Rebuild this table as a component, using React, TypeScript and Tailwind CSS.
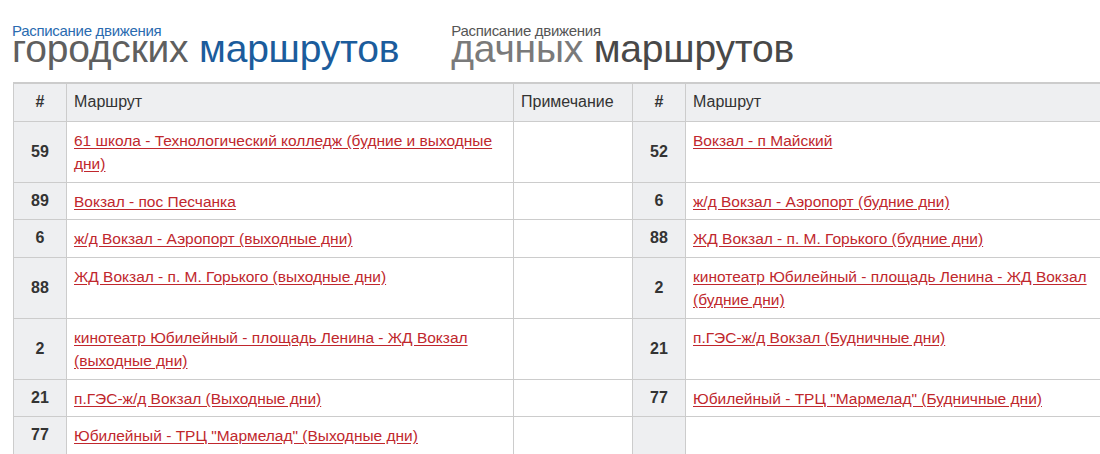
import React from 'react';

type Row = {
  ln: string;
  lt: string;
  rn?: string;
  rt?: string;
};

const rows: Row[] = [
  { ln: '59', lt: '61 школа - Технологический колледж (будние и выходные дни)', rn: '52', rt: 'Вокзал - п Майский' },
  { ln: '89', lt: 'Вокзал - пос Песчанка', rn: '6', rt: 'ж/д Вокзал - Аэропорт (будние дни)' },
  { ln: '6', lt: 'ж/д Вокзал - Аэропорт (выходные дни)', rn: '88', rt: 'ЖД Вокзал - п. М. Горького (будние дни)' },
  { ln: '88', lt: 'ЖД Вокзал - п. М. Горького (выходные дни)', rn: '2', rt: 'кинотеатр Юбилейный - площадь Ленина - ЖД Вокзал (будние дни)' },
  { ln: '2', lt: 'кинотеатр Юбилейный - площадь Ленина - ЖД Вокзал (выходные дни)', rn: '21', rt: 'п.ГЭС-ж/д Вокзал (Будничные дни)' },
  { ln: '21', lt: 'п.ГЭС-ж/д Вокзал (Выходные дни)', rn: '77', rt: 'Юбилейный - ТРЦ "Мармелад" (Будничные дни)' },
  { ln: '77', lt: 'Юбилейный - ТРЦ "Мармелад" (Выходные дни)' },
];

const Logo = ({ first, second, smallColor, firstColor, secondColor }: {
  first: string;
  second: string;
  smallColor: string;
  firstColor: string;
  secondColor: string;
}) => (
  <div className="flex flex-col">
    <div className={`text-[15px] leading-[15px] tracking-[-0.3px] ${smallColor}`}>Расписание движения</div>
    <div className="text-[39px] leading-[16px] mt-[3px] tracking-[-0.2px] whitespace-nowrap">
      <span className={firstColor}>{first}</span>{' '}
      <span className={secondColor}>{second}</span>
    </div>
  </div>
);

const Link = ({ children }: { children: React.ReactNode }) => (
  <a href="#" className="text-[#c0272d] underline underline-offset-2 decoration-[#c0272d]">{children}</a>
);

export default function App() {
  const num = 'bg-[#eeeff1] border border-[#cccccc] text-center align-middle font-bold text-[16px] text-[#333333] px-1';
  const cell = 'border border-[#cccccc] align-top px-[7px] pt-[7px] pb-[6px] leading-[23.5px]';
  return (
    <div className="w-[1100px] h-[454px] overflow-hidden bg-white font-['Liberation_Sans',Arial,sans-serif]">
      <div className="flex gap-[52px] pl-[12px] pt-[23px] h-[82px]">
        <Logo first="городских" second="маршрутов" smallColor="text-[#2a6bb0]" firstColor="text-[#5f5f5f]" secondColor="text-[#1b5c9c]" />
        <Logo first="дачных" second="маршрутов" smallColor="text-[#555555]" firstColor="text-[#7a7a7a]" secondColor="text-[#484848]" />
      </div>
      <div className="pl-[13px]">
        <table className="w-[1110px] border-collapse border-t-2 border-[#cccccc] text-[15.5px] table-fixed">
          <colgroup>
            <col className="w-[53px]" />
            <col className="w-[447px]" />
            <col className="w-[119px]" />
            <col className="w-[53px]" />
            <col />
          </colgroup>
          <thead>
            <tr className="bg-[#eeeff1] text-[16px] text-[#333333] h-[38px]">
              <th className="border border-[#cccccc] font-bold">#</th>
              <th className="border border-[#cccccc] font-normal text-left px-[7px]">Маршрут</th>
              <th className="border border-[#cccccc] font-normal text-left px-[7px]">Примечание</th>
              <th className="border border-[#cccccc] font-bold">#</th>
              <th className="border border-[#cccccc] font-normal text-left px-[7px]">Маршрут</th>
            </tr>
          </thead>
          <tbody>
            {rows.map((r) => (
              <tr key={r.ln + r.lt}>
                <td className={num}>{r.ln}</td>
                <td className={cell}><Link>{r.lt}</Link></td>
                <td className={cell}></td>
                <td className={num}>{r.rn}</td>
                <td className={cell}>{r.rt ? <Link>{r.rt}</Link> : null}</td>
              </tr>
            ))}
          </tbody>
        </table>
      </div>
    </div>
  );
}
